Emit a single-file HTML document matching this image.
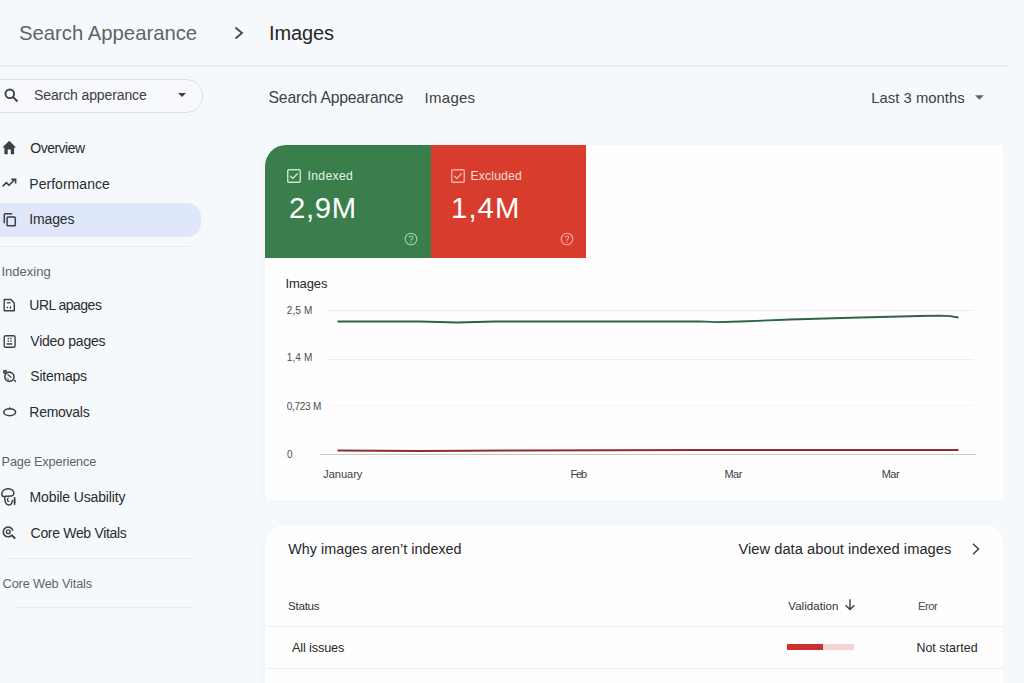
<!DOCTYPE html>
<html><head><meta charset="utf-8"><style>
html,body{margin:0;padding:0;}
body{width:1024px;height:683px;overflow:hidden;position:relative;background:#f6f9fc;font-family:"Liberation Sans", sans-serif;}
.t{position:absolute;white-space:nowrap;line-height:1;}
svg{overflow:visible}
</style></head><body>
<div class="t" style="left:19px;top:23px;font-size:20.3px;color:#5f6368;font-weight:400;letter-spacing:0.0px;">Search Appearance</div>
<svg style="position:absolute;left:233px;top:26px" width="12" height="14" viewBox="0 0 12 14"><path d="M2.5 1.5 L9 7 L2.5 12.5" fill="none" stroke="#444746" stroke-width="1.8"/></svg>
<div class="t" style="left:269px;top:23px;font-size:20px;color:#26272a;font-weight:400;letter-spacing:-0.117px;">Images</div>
<div style="position:absolute;left:0px;top:65px;width:1008px;height:1.5px;background:#eaedf0"></div>
<div style="position:absolute;left:-30px;top:78.5px;width:233px;height:34.5px;border:1px solid #dcdfe3;border-radius:18px;box-sizing:border-box;background:#f7f9fc"></div>
<svg style="position:absolute;left:4px;top:88.2px" width="16" height="16" viewBox="0 0 16 16"><circle cx="5.8" cy="5.8" r="4.3" fill="none" stroke="#3c4043" stroke-width="1.9"/><path d="M8.9 8.9 L13.5 13.5" stroke="#3c4043" stroke-width="1.9"/></svg>
<div class="t" style="left:34px;top:88px;font-size:14px;color:#3c4043;font-weight:400;letter-spacing:-0.108px;">Search apperance</div>
<svg style="position:absolute;left:177px;top:92px" width="10" height="6" viewBox="0 0 10 6"><path d="M1 1 L9 1 L5 5 Z" fill="#3c4043"/></svg>
<div style="position:absolute;left:-30px;top:202.5px;width:231px;height:34.5px;background:#dfe7fb;border-radius:0 14px 14px 0"></div>
<div class="t" style="left:30.3px;top:141px;font-size:14px;color:#2a2b2e;font-weight:400;letter-spacing:-0.505px;">Overview</div>
<div class="t" style="left:29.3px;top:177px;font-size:14px;color:#2a2b2e;font-weight:400;letter-spacing:0.034px;">Performance</div>
<div class="t" style="left:29.3px;top:212px;font-size:14px;color:#2a2b2e;font-weight:400;letter-spacing:-0.162px;">Images</div>
<div class="t" style="left:29.3px;top:298px;font-size:14px;color:#2a2b2e;font-weight:400;letter-spacing:-0.525px;">URL apages</div>
<div class="t" style="left:30.3px;top:334px;font-size:14px;color:#2a2b2e;font-weight:400;letter-spacing:-0.239px;">Video pages</div>
<div class="t" style="left:30.3px;top:369px;font-size:14px;color:#2a2b2e;font-weight:400;letter-spacing:-0.237px;">Sitemaps</div>
<div class="t" style="left:29.3px;top:405px;font-size:14px;color:#2a2b2e;font-weight:400;letter-spacing:-0.263px;">Removals</div>
<div class="t" style="left:29.6px;top:490px;font-size:14px;color:#2a2b2e;font-weight:400;letter-spacing:-0.149px;">Mobile Usability</div>
<div class="t" style="left:30.6px;top:526px;font-size:14px;color:#2a2b2e;font-weight:400;letter-spacing:-0.317px;">Core Web Vitals</div>
<div class="t" style="left:1.5px;top:265px;font-size:13px;color:#5f6368;font-weight:400;letter-spacing:0.011px;">Indexing</div>
<div class="t" style="left:1.6px;top:456px;font-size:12.7px;color:#5f6368;font-weight:400;letter-spacing:-0.141px;">Page Experience</div>
<div class="t" style="left:2.6px;top:578px;font-size:12.7px;color:#5f6368;font-weight:400;letter-spacing:-0.119px;">Core Web Vitals</div>
<div style="position:absolute;left:0px;top:245.5px;width:191px;height:1px;background:#e8eaed"></div>
<div style="position:absolute;left:10px;top:436.5px;width:180px;height:1px;background:#f1f3f5"></div>
<div style="position:absolute;left:8px;top:557.5px;width:186px;height:1px;background:#e8eaed"></div>
<div style="position:absolute;left:15px;top:607px;width:177px;height:1px;background:#e8eaed"></div>
<svg style="position:absolute;left:0px;top:138px" width="20" height="20" viewBox="0 0 20 20"><path d="M9.25 2.7 L2.4 9.4 H4.4 V16.2 H7.7 V11.6 H10.8 V16.2 H14.1 V9.4 H16.1 Z" fill="#3c4043"/></svg>
<svg style="position:absolute;left:0px;top:176px" width="20" height="20" viewBox="0 0 20 20"><path d="M2.6 10.4 L6.4 6.6 L9 9.2 L14.6 3.6" fill="none" stroke="#3c4043" stroke-width="1.6"/><path d="M11.2 3.4 H15.6 V7.6" fill="none" stroke="#3c4043" stroke-width="1.6"/></svg>
<svg style="position:absolute;left:0px;top:210px" width="20" height="20" viewBox="0 0 20 20"><rect x="7.1" y="7.1" width="8.2" height="8.7" rx="0.8" fill="none" stroke="#3c4043" stroke-width="1.5"/><path d="M4.3 13.2 V4.6 Q4.3 3.7 5.2 3.7 H12.2" fill="none" stroke="#3c4043" stroke-width="1.5"/></svg>
<svg style="position:absolute;left:0px;top:296px" width="20" height="20" viewBox="0 0 20 20"><path d="M4.2 3.5 H10.9 L14.3 6.9 V14.8 H4.2 Z" fill="none" stroke="#3c4043" stroke-width="1.4" stroke-linejoin="round"/><path d="M6.8 6.8 H10.6" stroke="#3c4043" stroke-width="1.3"/><rect x="6.6" y="10.8" width="1.5" height="1.4" fill="#3c4043"/><rect x="9.7" y="10.3" width="1.3" height="2.4" fill="#3c4043"/></svg>
<svg style="position:absolute;left:0px;top:332px" width="20" height="20" viewBox="0 0 20 20"><rect x="4.2" y="3.7" width="10.9" height="11.6" rx="1.6" fill="none" stroke="#3c4043" stroke-width="1.4"/><g fill="#3c4043"><rect x="7.6" y="5.8" width="1.4" height="1.4"/><rect x="10.2" y="5.8" width="1.4" height="1.4"/><rect x="7.6" y="8.4" width="1.4" height="1.4"/><rect x="10.2" y="8.4" width="1.4" height="1.4"/><rect x="6.6" y="11.2" width="5.6" height="1.5"/></g></svg>
<svg style="position:absolute;left:0px;top:368px" width="20" height="20" viewBox="0 0 20 20"><circle cx="5" cy="3.9" r="1.3" fill="none" stroke="#3c4043" stroke-width="1.6"/><circle cx="9.4" cy="8.7" r="4.6" fill="none" stroke="#3c4043" stroke-width="1.6"/><path d="M7.6 6.6 L11.4 9.6" stroke="#3c4043" stroke-width="1.3"/><path d="M6.6 10 A3 3 0 0 0 9 11.2" fill="none" stroke="#3c4043" stroke-width="1"/><path d="M12.4 11 L16.2 12.6 L15.6 14.6 Z" fill="#3c4043"/></svg>
<svg style="position:absolute;left:0px;top:404px" width="20" height="20" viewBox="0 0 20 20"><ellipse cx="9.7" cy="8.2" rx="5.9" ry="3.5" fill="none" stroke="#3c4043" stroke-width="1.6"/><path d="M9.4 2.4 L11.2 4.8 L9.2 5.4 Z" fill="#3c4043"/></svg>
<svg style="position:absolute;left:0px;top:486px" width="20" height="20" viewBox="0 0 20 20"><path d="M3.2 10.6 C1 9.6 1.3 5 4.6 3.6 C8 2.1 12.6 2.8 13.6 5.8 C14.3 8 13.4 9.8 11.2 10 Z" fill="none" stroke="#3c4043" stroke-width="1.5"/><path d="M4.8 10.6 C4.4 14.6 5.6 18.8 8.8 18.9 C11 19 12.2 17 12.5 14" fill="none" stroke="#3c4043" stroke-width="1.5"/><path d="M8.6 11.8 C7 12.2 6.8 15.6 9.2 15.4" fill="none" stroke="#3c4043" stroke-width="1.3"/><ellipse cx="14.6" cy="15" rx="1" ry="4.2" fill="#3c4043"/></svg>
<svg style="position:absolute;left:0px;top:524px" width="20" height="20" viewBox="0 0 20 20"><path d="M12.9 6.6 A4.9 4.9 0 1 0 11.6 11.4" fill="none" stroke="#3c4043" stroke-width="1.6"/><circle cx="8.3" cy="7.8" r="1.9" fill="none" stroke="#3c4043" stroke-width="1.4"/><path d="M11.2 10.8 L15.2 14.6" stroke="#3c4043" stroke-width="2"/></svg>
<div class="t" style="left:268.6px;top:90px;font-size:15.7px;color:#3c4043;font-weight:400;letter-spacing:-0.19px;">Search Appearance</div>
<div class="t" style="left:424.6px;top:90px;font-size:15px;color:#3c4043;font-weight:400;letter-spacing:0.262px;">Images</div>
<div class="t" style="left:871.3px;top:91px;font-size:14.8px;color:#3c4043;font-weight:400;letter-spacing:0.03px;">Last 3 months</div>
<svg style="position:absolute;left:972px;top:94px" width="14" height="8" viewBox="0 0 14 8"><path d="M3 1.3 L11.8 1.3 L7.4 5.8 Z" fill="#5f6368"/></svg>
<div style="position:absolute;left:265px;top:145px;width:738px;height:355px;background:#fefefe;border-radius:20px 0 4px 4px;box-shadow:-4px 0 6px -2px rgba(60,64,90,0.025)"></div>
<div style="position:absolute;left:265px;top:145px;width:166px;height:113px;background:#3a7e4c;border-top-left-radius:21px"></div>
<div style="position:absolute;left:431px;top:145px;width:155px;height:113px;background:#d83c2d"></div>
<svg style="position:absolute;left:287px;top:169px" width="14" height="14" viewBox="0 0 14 14"><rect x="0.75" y="0.75" width="12.5" height="12.5" rx="1" fill="none" stroke="#c2e8ca" stroke-width="1.4"/><path d="M3.3 7 L5.8 9.6 L10.8 4.2" fill="none" stroke="#c2e8ca" stroke-width="1.4"/></svg>
<div class="t" style="left:307.6px;top:170px;font-size:12.2px;color:#e6f5e9;font-weight:400;letter-spacing:0.301px;">Indexed</div>
<div class="t" style="left:289px;top:193px;font-size:29.3px;color:#ffffff;font-weight:400;letter-spacing:0.674px;">2,9M</div>
<svg style="position:absolute;left:404.3px;top:232px" width="14" height="14" viewBox="0 0 14 14"><circle cx="7" cy="7" r="5.8" fill="none" stroke="#9fd6ad" stroke-width="1.1"/><path d="M5.2 5.6 C5.2 3.4 8.8 3.4 8.8 5.6 C8.8 6.8 7 7 7 8.6" fill="none" stroke="#9fd6ad" stroke-width="1.1"/><circle cx="7" cy="10.2" r="0.7" fill="#9fd6ad"/></svg>
<svg style="position:absolute;left:450.5px;top:169px" width="14" height="14" viewBox="0 0 14 14"><rect x="0.75" y="0.75" width="12.5" height="12.5" rx="1" fill="none" stroke="#f7b0a0" stroke-width="1.4"/><path d="M3.3 7 L5.8 9.6 L10.8 4.2" fill="none" stroke="#f7b0a0" stroke-width="1.4"/></svg>
<div class="t" style="left:470.5px;top:170px;font-size:12.2px;color:#fbdcd5;font-weight:400;letter-spacing:0.163px;">Excluded</div>
<div class="t" style="left:451px;top:193px;font-size:29.3px;color:#ffffff;font-weight:400;letter-spacing:1.091px;">1,4M</div>
<svg style="position:absolute;left:560.3px;top:232px" width="14" height="14" viewBox="0 0 14 14"><circle cx="7" cy="7" r="5.8" fill="none" stroke="#f4b0a2" stroke-width="1.1"/><path d="M5.2 5.6 C5.2 3.4 8.8 3.4 8.8 5.6 C8.8 6.8 7 7 7 8.6" fill="none" stroke="#f4b0a2" stroke-width="1.1"/><circle cx="7" cy="10.2" r="0.7" fill="#f4b0a2"/></svg>
<div class="t" style="left:285.4px;top:277px;font-size:13px;color:#26272a;font-weight:400;letter-spacing:-0.106px;">Images</div>
<div style="position:absolute;left:327px;top:310px;width:647px;height:1px;background:#eceef0"></div>
<div class="t" style="left:286.7px;top:306px;font-size:10px;color:#4a4d51;font-weight:400;letter-spacing:0.155px;">2,5 M</div>
<div style="position:absolute;left:327px;top:359px;width:647px;height:1px;background:#eceef0"></div>
<div class="t" style="left:286.7px;top:353px;font-size:10px;color:#4a4d51;font-weight:400;letter-spacing:0.155px;">1,4 M</div>
<div style="position:absolute;left:327px;top:405px;width:647px;height:1px;background:#f5f5f5"></div>
<div class="t" style="left:286.7px;top:402px;font-size:10px;color:#4a4d51;font-weight:400;letter-spacing:-0.267px;">0,723 M</div>
<div class="t" style="left:287px;top:450px;font-size:10px;color:#4a4d51;font-weight:400;letter-spacing:0px;">0</div>
<div style="position:absolute;left:320px;top:454px;width:656px;height:1px;background:#c4c6c9"></div>
<svg style="position:absolute;left:320px;top:300px" width="660" height="160" viewBox="0 0 660 160"><path d="M17.5 21.5 L100 21.5 L137 22.5 L175 21.5 L380 21.3 L397 22.2 L420 21.5 L470 19.5 L540 17.5 L600 16 L620 15.7 L630 16.2 L638.5 17.5" fill="none" stroke="#2a6441" stroke-width="1.8"/><path d="M17.5 150.5 L100 151 L200 150.5 L380 150 L638.5 150" fill="none" stroke="#8e2a36" stroke-width="2.1"/></svg>
<div class="t" style="left:323.3px;top:469px;font-size:11px;color:#3c4043;font-weight:400;letter-spacing:-0.022px;">January</div>
<div class="t" style="left:570.5px;top:469px;font-size:11px;color:#3c4043;font-weight:400;letter-spacing:-1.168px;">Feb</div>
<div class="t" style="left:724.4px;top:469px;font-size:11px;color:#3c4043;font-weight:400;letter-spacing:-0.44px;">Mar</div>
<div class="t" style="left:881.7px;top:469px;font-size:11px;color:#3c4043;font-weight:400;letter-spacing:-0.54px;">Mar</div>
<div style="position:absolute;left:265px;top:524.5px;width:738px;height:200px;background:#fefefe;border-radius:20px 16px 0 0;box-shadow:-4px 0 6px -2px rgba(60,64,90,0.025)"></div>
<div class="t" style="left:288.3px;top:542px;font-size:14.3px;color:#26272a;font-weight:400;letter-spacing:0.034px;">Why images aren’t indexed</div>
<div class="t" style="left:738.4px;top:542px;font-size:14.7px;color:#26272a;font-weight:400;letter-spacing:0.032px;">View data about indexed images</div>
<svg style="position:absolute;left:970px;top:542px" width="12" height="14" viewBox="0 0 12 14"><path d="M3 1.8 L8.5 7 L3 12.2" fill="none" stroke="#3c4043" stroke-width="1.5"/></svg>
<div class="t" style="left:288px;top:600px;font-size:11.6px;color:#303134;font-weight:400;letter-spacing:-0.254px;">Status</div>
<div class="t" style="left:788.3px;top:601px;font-size:11.5px;color:#303134;font-weight:400;letter-spacing:0.049px;">Validation</div>
<svg style="position:absolute;left:843px;top:598px" width="14" height="14" viewBox="0 0 14 14"><path d="M7 1.2 V11.6 M2.6 7.2 L7 11.6 L11.4 7.2" fill="none" stroke="#3c4043" stroke-width="1.4"/></svg>
<div class="t" style="left:918px;top:601px;font-size:11.5px;color:#4a4d51;font-weight:400;letter-spacing:-0.632px;">Eror</div>
<div style="position:absolute;left:267px;top:626px;width:736px;height:1px;background:#eceef0"></div>
<div class="t" style="left:292px;top:642px;font-size:12.7px;color:#26272a;font-weight:400;letter-spacing:-0.138px;">All issues</div>
<div style="position:absolute;left:787px;top:643.5px;width:35.5px;height:6.8px;background:#cc2f2f"></div>
<div style="position:absolute;left:822.5px;top:643.5px;width:31.5px;height:6.8px;background:#f4d4d3"></div>
<div class="t" style="left:916.4px;top:642px;font-size:12.4px;color:#26272a;font-weight:400;letter-spacing:0.059px;">Not started</div>
<div style="position:absolute;left:267px;top:668px;width:736px;height:1px;background:#eceef0"></div>
</body></html>
